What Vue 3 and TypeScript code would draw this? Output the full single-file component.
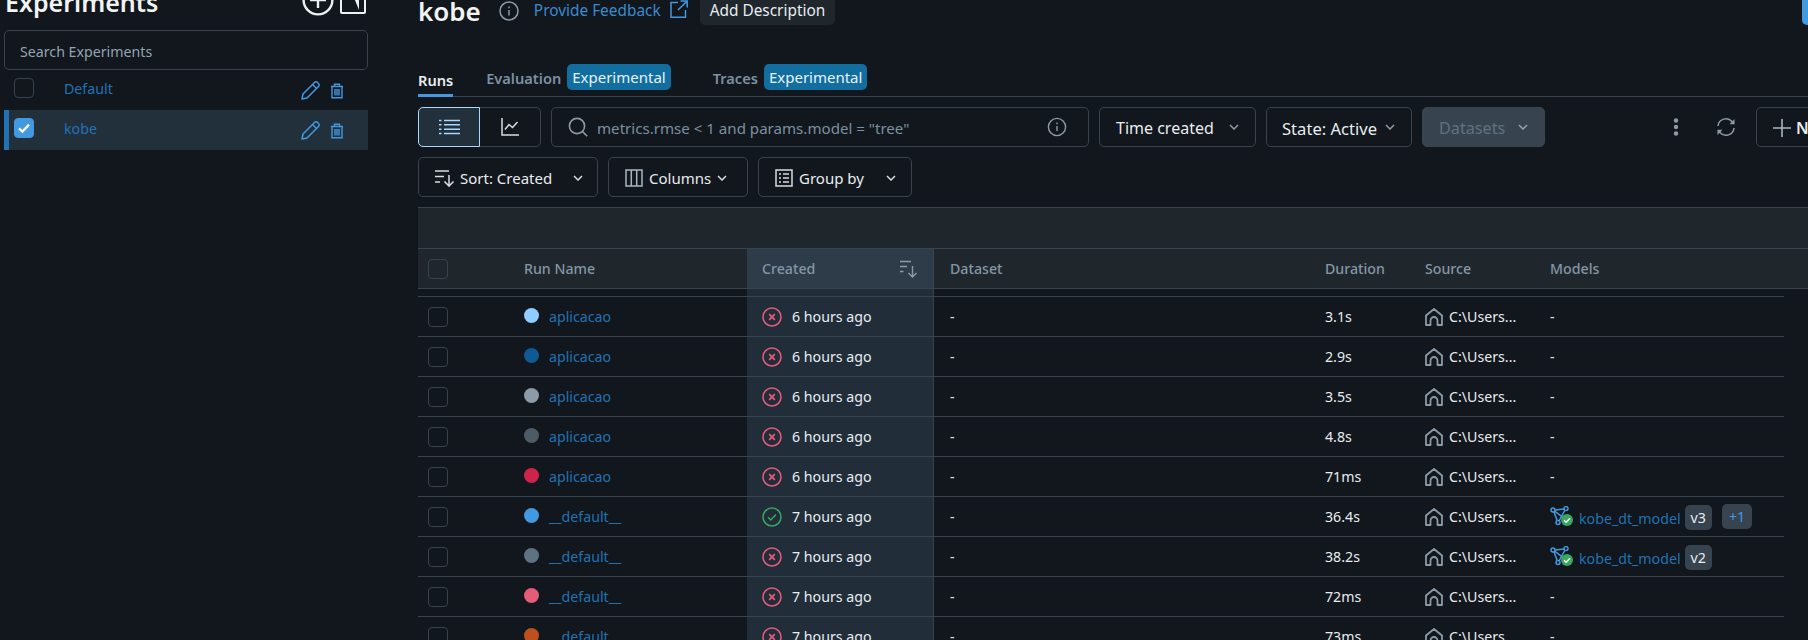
<script setup lang="ts">
interface Run {
  name: string
  color: string
  created: string
  ok?: boolean
  duration: string
  model?: string
  version?: string
  extra?: string
}

const runs: Run[] = [
  { name: 'aplicacao', color: '#8fcdff', created: '6 hours ago', duration: '3.1s' },
  { name: 'aplicacao', color: '#0e5a94', created: '6 hours ago', duration: '2.9s' },
  { name: 'aplicacao', color: '#8d9ba8', created: '6 hours ago', duration: '3.5s' },
  { name: 'aplicacao', color: '#4d5b67', created: '6 hours ago', duration: '4.8s' },
  { name: 'aplicacao', color: '#cf2449', created: '6 hours ago', duration: '71ms' },
  { name: '__default__', color: '#4299e0', created: '7 hours ago', ok: true, duration: '36.4s', model: 'kobe_dt_model', version: 'v3', extra: '+1' },
  { name: '__default__', color: '#5f7281', created: '7 hours ago', duration: '38.2s', model: 'kobe_dt_model', version: 'v2' },
  { name: '__default__', color: '#e65b77', created: '7 hours ago', duration: '72ms' },
  { name: '__default__', color: '#be501e', created: '7 hours ago', duration: '73ms' },
]

const experiments = [
  { name: 'Default', active: false },
  { name: 'kobe', active: true },
]
</script>

<template>
  <div class="page">
    <aside class="sidebar">
      <div class="side-head">
        <h1 class="side-title">Experiments</h1>
        <svg class="head-plus" width="32" height="32" viewBox="0 0 32 32" fill="none" stroke="#eef1f4" stroke-width="2.4">
          <circle cx="16" cy="16" r="14.4" />
          <path d="M16 8v16M8 16h16" />
        </svg>
        <svg class="head-collapse" width="26" height="26" viewBox="0 0 26 26">
          <rect x="1" y="1" width="24" height="24" rx="1" fill="none" stroke="#eef1f4" stroke-width="2" />
          <path d="M10 0h9v22z" fill="#eef1f4" />
        </svg>
      </div>
      <div class="side-search">Search Experiments</div>
      <div v-for="exp in experiments" :key="exp.name" class="exp-row" :class="{ active: exp.active }">
        <span class="exp-check" :class="{ checked: exp.active }">
          <svg v-if="exp.active" width="14" height="14" viewBox="0 0 14 14" fill="none" stroke="#fff" stroke-width="2.4">
            <path d="M2 7.4l3.4 3.2L12 3.6" />
          </svg>
        </span>
        <span class="exp-name">{{ exp.name }}</span>
        <svg class="exp-edit" width="19" height="19" viewBox="0 0 19 19" fill="none" stroke="#4299e0" stroke-width="1.5" stroke-linejoin="round">
          <path d="M1 18l1-5L13.5 1.5a2 2 0 0 1 3 0l1 1a2 2 0 0 1 0 3L6 17z" />
          <path d="M11.5 3.5l4 4" />
        </svg>
        <svg class="exp-trash" width="14" height="16" viewBox="0 0 14 16" fill="none" stroke="#4299e0" stroke-width="1.4">
          <path d="M1 3.5h12M4.5 3.5V1.2h5v2.3M2 3.5v11.3h10V3.5M5 6v6.5M7 6v6.5M9 6v6.5" />
        </svg>
      </div>
    </aside>

    <main class="main">
      <div class="title-row">
        <h2 class="exp-title">kobe</h2>
        <svg class="info-icon" width="20" height="20" viewBox="0 0 20 20" fill="none" stroke="#8d9ba8" stroke-width="1.5">
          <circle cx="10" cy="10" r="9" />
          <path d="M10 9v5.5M10 5.4v1.8" />
        </svg>
        <a class="feedback">Provide Feedback</a>
        <svg class="ext-icon" width="18" height="18" viewBox="0 0 18 18" fill="none" stroke="#4299e0" stroke-width="1.5">
          <path d="M8 2.5H1v14.7h14.5V10M10.5 1h6.7v6.5M17 1.2L8 10" />
        </svg>
        <button class="desc-btn">Add Description</button>
      </div>

      <div class="tabs">
        <span class="tab current">Runs</span>
        <span class="tab eval">Evaluation</span>
        <span class="exp-tag">Experimental</span>
        <span class="tab traces">Traces</span>
        <span class="exp-tag">Experimental</span>
      </div>

      <div class="toolbar">
        <div class="segment">
          <span class="seg active">
            <svg width="21" height="16" viewBox="0 0 21 16" fill="none" stroke="#a9d8ff" stroke-width="1.5">
              <path d="M5 1.5h16M5 5.8h16M5 10.2h16M5 14.5h16M0 1.5h2.5M0 5.8h2.5M0 10.2h2.5M0 14.5h2.5" />
            </svg>
          </span>
          <span class="seg">
            <svg width="18" height="18" viewBox="0 0 18 18" fill="none" stroke="#d7dde3" stroke-width="1.5">
              <path d="M1 0v17h17M4 11.5l4-5 3.5 3L16.5 4" />
            </svg>
          </span>
        </div>
        <div class="search">
          <svg width="20" height="20" viewBox="0 0 20 20" fill="none" stroke="#8d9ba8" stroke-width="1.6">
            <circle cx="9" cy="9" r="7.6" />
            <path d="M14.6 14.6l4.6 4.6" />
          </svg>
          <span class="search-text">metrics.rmse &lt; 1 and params.model = "tree"</span>
          <svg class="search-info" width="20" height="20" viewBox="0 0 20 20" fill="none" stroke="#8d9ba8" stroke-width="1.4">
            <circle cx="10" cy="10" r="8.6" />
            <path d="M10 9v5M10 5.6v1.6" />
          </svg>
        </div>
        <button class="btn select time-btn"><span>Time created</span> <svg width="10" height="6" viewBox="0 0 10 6" fill="none" stroke="#8d9ba8" stroke-width="1.5"><path d="M1 1l4 4 4-4" /></svg></button>
        <button class="btn select state-btn"><span>State: Active</span> <svg width="10" height="6" viewBox="0 0 10 6" fill="none" stroke="#8d9ba8" stroke-width="1.5"><path d="M1 1l4 4 4-4" /></svg></button>
        <button class="btn select data-btn"><span>Datasets</span> <svg width="10" height="6" viewBox="0 0 10 6" fill="none" stroke="#92a4b3" stroke-width="1.5"><path d="M1 1l4 4 4-4" /></svg></button>
        <svg class="kebab" width="6" height="18" viewBox="0 0 6 18" fill="#8d9ba8">
          <circle cx="3" cy="2.5" r="2.2" />
          <circle cx="3" cy="9" r="2.2" />
          <circle cx="3" cy="15.5" r="2.2" />
        </svg>
        <svg class="refresh" width="20" height="20" viewBox="0 0 20 20" fill="none" stroke="#8d9ba8" stroke-width="1.5">
          <path d="M2 9a8 8 0 0 1 14-4.5l2 2M18 11a8 8 0 0 1-14 4.5l-2-2" />
          <path d="M18.5 2v5.2h-5z M1.5 18v-5.2h5z" fill="#8d9ba8" stroke="none" />
        </svg>
        <button class="btn new-btn">
          <svg width="18" height="18" viewBox="0 0 18 18" fill="none" stroke="#a9b6c1" stroke-width="1.6"><path d="M9 0v18M0 9h18" /></svg>
          New
        </button>
      </div>

      <div class="toolbar second">
        <button class="btn sort-btn">
          <svg width="20" height="18" viewBox="0 0 20 18" fill="none" stroke="#d7dde3" stroke-width="1.5">
            <path d="M0 2h14M0 7.5h9M0 13h5M14 6v11M9.5 12.5l4.5 4.6 4.5-4.6" />
          </svg>
          <span>Sort: Created</span>
          <svg class="chev wide" width="10" height="6" viewBox="0 0 10 6" fill="none" stroke="#d7dde3" stroke-width="1.5"><path d="M1 1l4 4 4-4" /></svg>
        </button>
        <button class="btn col-btn">
          <svg width="18" height="18" viewBox="0 0 18 18" fill="none" stroke="#a9b6c1" stroke-width="1.5">
            <path d="M1 1h16v16H1zM6.3 1v16M11.7 1v16" />
          </svg>
          <span>Columns</span>
          <svg class="chev" width="10" height="6" viewBox="0 0 10 6" fill="none" stroke="#d7dde3" stroke-width="1.5"><path d="M1 1l4 4 4-4" /></svg>
        </button>
        <button class="btn group-btn">
          <svg width="18" height="18" viewBox="0 0 18 18" fill="none" stroke="#d7dde3" stroke-width="1.5">
            <path d="M1 1h16v16H1zM4 5h2M8 5h6M4 9h2M8 9h6M4 13h2M8 13h6" />
          </svg>
          <span>Group by</span>
          <svg class="chev wide" width="10" height="6" viewBox="0 0 10 6" fill="none" stroke="#d7dde3" stroke-width="1.5"><path d="M1 1l4 4 4-4" /></svg>
        </button>
      </div>

      <div class="table-bar"></div>
      <div class="table-head grid">
        <div class="cell"><span class="check"></span></div>
        <div class="cell">Run Name</div>
        <div class="cell created-head">
          <span>Created</span>
          <svg width="18" height="18" viewBox="0 0 18 18" fill="none" stroke="#8d9ba8" stroke-width="1.4">
            <path d="M0 1.5h11M0 6.5h7M0 11.5h3.5M12.5 6v11M8.5 13l4 4 4-4" />
          </svg>
        </div>
        <div class="cell pad">Dataset</div>
        <div class="cell">Duration</div>
        <div class="cell">Source</div>
        <div class="cell">Models</div>
      </div>

      <div class="table-body">
        <div class="spacer grid">
          <div></div>
          <div></div>
          <div class="created-cell"></div>
        </div>
        <div v-for="(run, i) in runs" :key="i" class="row grid">
          <div class="cell"><span class="check"></span></div>
          <div class="cell">
            <span class="dot" :style="{ background: run.color }"></span>
            <a class="link">{{ run.name }}</a>
          </div>
          <div class="cell created-cell">
            <svg v-if="run.ok" class="status" width="20" height="20" viewBox="0 0 20 20" fill="none" stroke="#3ba65e" stroke-width="1.5">
              <circle cx="10" cy="10" r="9" />
              <path d="M6 10.2l2.8 2.8L14 7.6" />
            </svg>
            <svg v-else class="status" width="20" height="20" viewBox="0 0 20 20" fill="none" stroke="#e65b77" stroke-width="1.5">
              <circle cx="10" cy="10" r="9" />
              <path d="M7.2 7.2l5.6 5.6M12.8 7.2l-5.6 5.6" stroke-width="1.8" />
            </svg>
            {{ run.created }}
          </div>
          <div class="cell pad">-</div>
          <div class="cell">{{ run.duration }}</div>
          <div class="cell">
            <svg class="home" width="18" height="18" viewBox="0 0 18 18" fill="none" stroke="#8d9ba8" stroke-width="1.8" stroke-linejoin="round">
              <path d="M1 17V7.5L9 1l8 6.5V17h-4.5v-4.5a3.5 3.5 0 0 0-7 0V17z" />
            </svg>
            C:\Users...
          </div>
          <div class="cell">
            <template v-if="run.model">
              <span class="model-icon">
                <svg width="22" height="20" viewBox="0 0 22 20" fill="none" stroke="#4299e0" stroke-width="1.5">
                  <circle cx="3" cy="4" r="2" />
                  <circle cx="16" cy="2.6" r="2" />
                  <circle cx="8" cy="16.5" r="2" />
                  <path d="M5 4l9-1M4 6l3.2 8.6M14.8 4.3L9 15M4.6 5.2l8 6" />
                </svg>
                <svg class="model-ok" width="12" height="12" viewBox="0 0 12 12">
                  <circle cx="6" cy="6" r="6" fill="#3ba65e" />
                  <path d="M3 6.2l2.1 2L9 4.2" fill="none" stroke="#fff" stroke-width="1.4" />
                </svg>
              </span>
              <a class="link model-link">{{ run.model }}</a>
              <span class="version">{{ run.version }}</span>
              <span v-if="run.extra" class="more">{{ run.extra }}</span>
            </template>
            <template v-else>-</template>
          </div>
        </div>
      </div>
    </main>

    <div class="corner"></div>
  </div>
</template>

<style>
html,
body {
  margin: 0;
  background: #11171c;
}
</style>

<style scoped>
.page {
  display: flex;
  position: relative;
  width: 1808px;
  height: 640px;
  overflow: hidden;
  background: #11171c;
  color: #e8ecf0;
  font-family: "Noto Sans", "Open Sans", sans-serif;
  font-size: 14.2px;
}

button {
  font-family: inherit;
  color: inherit;
}

svg {
  flex-shrink: 0;
}

.sidebar {
  width: 364px;
  margin-left: 4px;
  flex-shrink: 0;
}

.side-head {
  display: flex;
  height: 46px;
  margin-top: -16px;
  align-items: flex-start;
  position: relative;
}

.side-title {
  margin: 0 0 0 1px;
  font-size: 25px;
  line-height: 36px;
  font-weight: 600;
  color: #f1f3f5;
}

.head-plus {
  margin-left: auto;
}

.head-collapse {
  margin: 4px 2px 0 6px;
}

.side-search {
  height: 40px;
  box-sizing: border-box;
  border: 1px solid #37444f;
  border-radius: 5px;
  padding: 2px 0 0 15px;
  display: flex;
  align-items: center;
  color: #92a4b3;
}

.exp-row {
  display: flex;
  align-items: center;
  height: 40px;
  padding: 0 0 4px 10px;
  box-sizing: border-box;
  color: #2272b4;
}

.exp-row.active {
  background: #22303c;
  border-left: 5px solid #2272b4;
  padding-left: 5px;
}

.exp-check {
  width: 20px;
  height: 20px;
  box-sizing: border-box;
  border: 1px solid #37444f;
  border-radius: 4px;
  display: flex;
  align-items: center;
  justify-content: center;
}

.exp-check.checked {
  background: #4299e0;
  border-color: #4299e0;
}

.exp-name {
  margin-left: 30px;
  flex: 1;
}

.exp-edit {
  margin-right: 10px;
  margin-top: 5px;
}

.exp-trash {
  margin-right: 24px;
  margin-top: 6px;
}

.main {
  flex: 1;
  margin-left: 50px;
  min-width: 0;
}

.title-row {
  display: flex;
  align-items: center;
  height: 27px;
  margin-top: -3px;
}

.exp-title {
  margin: 2px 0 0;
  font-size: 26px;
  line-height: 27px;
  font-weight: 600;
  color: #f1f3f5;
}

.info-icon {
  margin-left: 18px;
}

.feedback {
  margin-left: 15px;
  font-size: 15.4px;
  color: #3c8ad0;
}

.ext-icon {
  margin-left: 9px;
  margin-top: -4px;
}

.desc-btn {
  margin-left: 12px;
  height: 28px;
  padding: 0 10px;
  border: 0;
  border-radius: 5px;
  background: #1f272d;
  font-size: 15.4px;
}

.tabs {
  display: flex;
  align-items: center;
  height: 33px;
  margin-top: 39px;
  border-bottom: 1px solid #37444f;
  position: relative;
  font-weight: 600;
}

.tab {
  color: #7c90a1;
  font-size: 14.6px;
  margin-bottom: 4px;
}

.tab.current {
  color: #e8ecf0;
  position: relative;
  height: 33px;
  line-height: 33px;
  border-bottom: 3px solid #4299e0;
  box-sizing: border-box;
  margin-bottom: -1px;
}

.eval {
  margin-left: 33px;
}

.traces {
  margin-left: 42px;
}

.exp-tag {
  margin-left: 6px;
  height: 26px;
  line-height: 26px;
  padding: 0 5px;
  border-radius: 5px;
  background: #126e9e;
  color: #e8f2f8;
  font-weight: 400;
  font-size: 15px;
  margin-bottom: 5px;
}

.toolbar {
  display: flex;
  align-items: center;
  gap: 10px;
  margin-top: 10px;
  height: 40px;
}

.segment {
  display: flex;
  width: 123px;
  height: 40px;
  box-sizing: border-box;
  border: 1px solid #37444f;
  border-radius: 5px;
  flex-shrink: 0;
}

.seg {
  width: 61px;
  display: flex;
  align-items: center;
  justify-content: center;
}

.seg.active {
  margin: -1px 0 -1px -1px;
  width: 62px;
  background: #22303c;
  border: 1px solid #a9d8ff;
  border-radius: 5px 0 0 5px;
}

.search {
  display: flex;
  align-items: center;
  width: 538px;
  height: 40px;
  box-sizing: border-box;
  border: 1px solid #37444f;
  border-radius: 5px;
  padding: 0 21px 0 16px;
  gap: 9px;
  flex-shrink: 0;
}

.search-text {
  flex: 1;
  color: #7c90a1;
  font-size: 15.1px;
  white-space: nowrap;
  padding-top: 2px;
}

.btn {
  display: inline-flex;
  align-items: center;
  height: 40px;
  box-sizing: border-box;
  border: 1px solid #37444f;
  border-radius: 5px;
  background: transparent;
  font-size: 15px;
  padding: 1px 10px 0;
  flex-shrink: 0;
  white-space: nowrap;
}

.select {
  justify-content: space-between;
  padding: 0 16px;
}

.select span {
  padding-top: 2px;
}

.chev {
  margin-left: 9px;
}

.chev.wide {
  margin-left: 16px;
}

.time-btn {
  width: 157px;
  font-size: 16px;
}

.state-btn {
  width: 146px;
  font-size: 16.6px;
  padding-left: 15px;
}

.data-btn {
  width: 123px;
  font-size: 16.2px;
  background: #37444f;
  color: #5f7281;
}

.kebab {
  margin-left: 118px;
}

.refresh {
  margin-left: 27px;
}

.new-btn {
  width: 120px;
  margin-left: 10px;
  padding-left: 16px;
  gap: 5px;
  font-weight: 600;
  font-size: 16px;
}

.sort-btn {
  width: 180px;
  padding-left: 16px;
  gap: 5px;
}

.col-btn {
  width: 140px;
  padding-left: 16px;
  gap: 6px;
}

.group-btn {
  width: 154px;
  padding-left: 16px;
  gap: 6px;
}

.col-btn .chev {
  margin-left: 0;
}

.table-bar {
  height: 40px;
  margin-top: 10px;
  background: #1f272d;
  border-top: 1px solid #37444f;
}

.grid {
  display: grid;
  grid-template-columns: 106px 223px 187px 391px 100px 125px 1fr;
}

.table-head {
  height: 39px;
  background: #1f272d;
  border-top: 1px solid #37444f;
  border-bottom: 1px solid #37444f;
  color: #8396a6;
  font-weight: 500;
}

.cell {
  display: flex;
  align-items: center;
  white-space: nowrap;
  min-width: 0;
}

.cell:first-child {
  padding-left: 10px;
}

.pad {
  padding-left: 16px;
}

.created-head {
  background: #2e3c4a;
  padding: 0 15px;
  justify-content: space-between;
  border-right: 1px solid #37444f;
}

.table-body {
  width: 1366px;
}

.spacer {
  height: 7px;
  border-bottom: 1px solid #37444f;
}

.row {
  height: 39px;
  border-bottom: 1px solid #37444f;
}

.created-cell {
  background: #212e3a;
  padding-left: 15px;
  border-right: 1px solid #37444f;
}

.check {
  width: 20px;
  height: 20px;
  box-sizing: border-box;
  border: 1px solid #37444f;
  border-radius: 4px;
}

.dot {
  width: 15px;
  height: 15px;
  border-radius: 50%;
  margin-right: 10px;
  margin-top: -2px;
}

.link {
  color: #2272b4;
}

.status {
  margin-right: 10px;
}

.home {
  margin-right: 6px;
}

.model-icon {
  position: relative;
  width: 23px;
  height: 20px;
  margin-right: 6px;
  margin-top: -2px;
}

.model-ok {
  position: absolute;
  right: 0;
  bottom: 0;
}

.model-link {
  margin-top: 3px;
}

.version,
.more {
  height: 25px;
  line-height: 25px;
  padding: 0 6px;
  border-radius: 5px;
  background: #37444f;
}

.version {
  margin-left: 4px;
  margin-top: 2px;
}

.more {
  margin-left: 10px;
  padding: 0 7px;
  color: #4299e0;
}

.corner {
  position: absolute;
  top: 0;
  right: 0;
  width: 6px;
  height: 25px;
  background: #4299e0;
  border-bottom-left-radius: 5px;
}
</style>
